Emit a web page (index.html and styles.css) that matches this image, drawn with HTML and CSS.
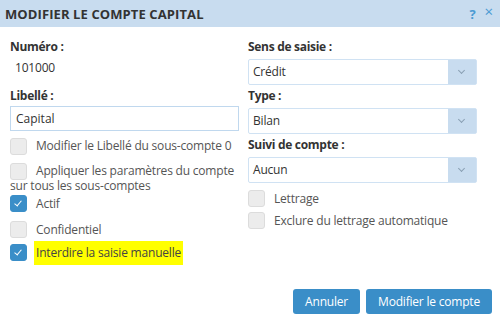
FILE: index.html
```html
<!DOCTYPE html>
<html lang="fr">
<head>
  <meta charset="UTF-8" />
  <title>Modifier le compte capital</title>
  <link rel="stylesheet" href="styles.css">
</head>
<body>

  <div class="dialog">
    <div class="dialog-header">
      <span class="title">MODIFIER LE COMPTE CAPITAL</span>
      <span class="tools"><span class="help">?</span><span class="close">&times;</span></span>
    </div>

    <div class="dialog-body">
      <div class="col">
        <label class="field-label">Numéro :</label>
        <div class="static">101000</div>
        <label class="field-label libelle">Libellé :</label>
        <input class="text-input" type="text" value="Capital">

        <div class="check first"><span class="box"></span><span>Modifier le Libellé du sous-compte 0</span></div>
        <div class="check wrap"><span class="box"></span>Appliquer les paramètres du compte sur tous les sous-comptes</div>
        <div class="check actif"><span class="box checked"></span><span>Actif</span></div>
        <div class="check confid"><span class="box"></span><span>Confidentiel</span></div>
        <div class="check interdire"><span class="box checked"></span><span class="mark">Interdire la saisie manuelle</span></div>
      </div>

      <div class="col">
        <label class="field-label">Sens de saisie :</label>
        <div class="select"><span>Crédit</span><span class="arrow"></span></div>
        <label class="field-label">Type :</label>
        <div class="select"><span>Bilan</span><span class="arrow"></span></div>
        <label class="field-label">Suivi de compte :</label>
        <div class="select"><span>Aucun</span><span class="arrow"></span></div>

        <div class="check lettrage"><span class="box"></span><span>Lettrage</span></div>
        <div class="check exclure"><span class="box"></span><span>Exclure du lettrage automatique</span></div>
      </div>
    </div>

    <div class="dialog-footer">
      <button class="btn">Annuler</button>
      <button class="btn">Modifier le compte</button>
    </div>
  </div>

</body>
</html>
```

FILE: styles.css
```css
body {
  margin: 0;
  padding: 0;
  font-family: 'Open Sans', 'Noto Sans', sans-serif;
  font-size: 12px;
  letter-spacing: -0.2px;
  color: #333;
  background: white;
}

.dialog {
  width: 500px;
  height: 318px;
  display: flex;
  flex-direction: column;
}

.dialog-header {
  height: 27px;
  background-color: #c8dcef;
  display: flex;
  align-items: center;
  justify-content: space-between;
  padding: 0 7px 0 5px;
}

.title {
  font-size: 13px;
  font-weight: bold;
  color: #333;
  letter-spacing: 0.1px;
}

.tools {
  color: #4a9ad3;
  font-size: 13px;
  font-weight: bold;
  display: flex;
  gap: 9px;
}

.close {
  font-weight: normal;
  font-size: 15px;
  line-height: 13px;
}

.dialog-body {
  display: flex;
  gap: 9px;
  padding: 11px 23px 0 10px;
}

.col {
  width: 229px;
  display: flex;
  flex-direction: column;
}

.field-label {
  font-weight: bold;
  letter-spacing: -0.3px;
  line-height: 18px;
  margin-bottom: 2.5px;
}

.static {
  padding-left: 5px;
  line-height: 18px;
  margin-top: 0.5px;
}

.libelle {
  margin-top: 10px;
  margin-bottom: 1px;
}

.text-input {
  box-sizing: border-box;
  width: 229px;
  height: 25px;
  border: 1px solid #c0d8ee;
  padding: 0 5px;
  font: inherit;
  color: #333;
  margin: 0;
}

.select {
  box-sizing: border-box;
  height: 26px;
  border: 1px solid #d0e2f3;
  border-radius: 2px;
  display: flex;
  align-items: center;
  justify-content: space-between;
  padding-left: 4px;
  margin-bottom: 2.5px;
}

.arrow {
  width: 28px;
  height: 100%;
  background-color: #c8dcef;
  position: relative;
}

.arrow::after {
  content: "";
  position: absolute;
  left: 11px;
  top: 8px;
  width: 4px;
  height: 4px;
  border-right: 1px solid #8aa0b4;
  border-bottom: 1px solid #8aa0b4;
  transform: rotate(45deg);
}

.check {
  display: flex;
  align-items: center;
  gap: 9px;
  color: #555;
  line-height: 16px;
}

.check.first {
  margin-top: 6.5px;
}

.check.wrap {
  display: block;
  line-height: 15px;
  margin-top: 8.5px;
}

.check.wrap .box {
  display: inline-block;
  vertical-align: middle;
  margin: -3px 9px -2px 0;
}

.check.actif {
  margin-top: 2px;
}

.check.confid {
  margin-top: 9px;
}

.check.interdire {
  margin-top: 6px;
}

.check.lettrage {
  margin-top: 5px;
}

.check.exclure {
  margin-top: 5px;
}

.box {
  box-sizing: border-box;
  width: 17px;
  height: 17px;
  flex: none;
  border: 1px solid #dcdcdc;
  border-radius: 3px;
  background-color: #ececec;
  position: relative;
}

.box.checked {
  background-color: #3a8ec8;
  border-color: #3a8ec8;
}

.box.checked::after {
  content: "";
  position: absolute;
  left: 5px;
  top: 3px;
  width: 3px;
  height: 6px;
  border-right: 1.5px solid white;
  border-bottom: 1.5px solid white;
  transform: rotate(40deg);
}

.mark {
  background-color: #ffff00;
  color: #444;
  padding: 4px 2px;
  margin: -4px 0 -4px -2px;
}

.dialog-footer {
  margin-top: auto;
  display: flex;
  justify-content: flex-end;
  gap: 6px;
  padding: 0 8px 4px 0;
}

.btn {
  height: 25px;
  border: none;
  border-radius: 3px;
  background-color: #3a8ec8;
  color: white;
  font: inherit;
  font-size: 12px;
  letter-spacing: -0.2px;
  padding: 0 12px;
}
```
